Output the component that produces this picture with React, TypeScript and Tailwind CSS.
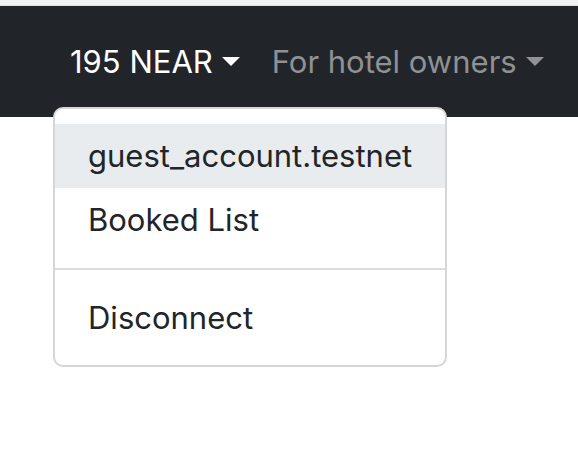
import { useState } from "react";

const items = ["guest_account.testnet", "Booked List"];

function Caret({ className }: { className: string }) {
  return (
    <span
      className={`ml-[9px] inline-block h-0 w-0 border-x-[9.5px] border-t-[9px] border-x-transparent ${className}`}
    />
  );
}

export default function App() {
  const [hovered, setHovered] = useState<string | null>("guest_account.testnet");

  return (
    <div className="min-h-[460px] w-[578px] bg-white font-['Inter',sans-serif]">
      <div className="h-[6px] border-b border-[#e2e2e2] bg-[#f2f2f2]" />
      <nav className="relative flex h-[111px] items-center bg-[#212529] pl-[54px] text-[31px] leading-[48px]">
        <div className="relative">
          <button className="flex items-center px-4 text-white">
            195 NEAR
            <Caret className="border-t-white" />
          </button>
          <div className="absolute left-[-1px] top-[69px] z-10 w-[394px] rounded-[10px] border-2 border-[#d6d6d6] bg-white py-[15px] text-[#212529]">
            {items.map((it) => (
              <div
                key={it}
                onMouseEnter={() => setHovered(it)}
                className={`flex h-16 items-center pl-[33px] ${hovered === it ? "bg-[#e9ecef]" : ""}`}
              >
                {it}
              </div>
            ))}
            <div className="my-4 h-[2px] bg-[#dcdcdc]" />
            <div className="flex h-16 items-center pl-[33px]">Disconnect</div>
          </div>
        </div>
        <button className="flex items-center px-4 text-[#8f9194]">
          For hotel owners
          <Caret className="border-t-[#8f9194]" />
        </button>
      </nav>
    </div>
  );
}
